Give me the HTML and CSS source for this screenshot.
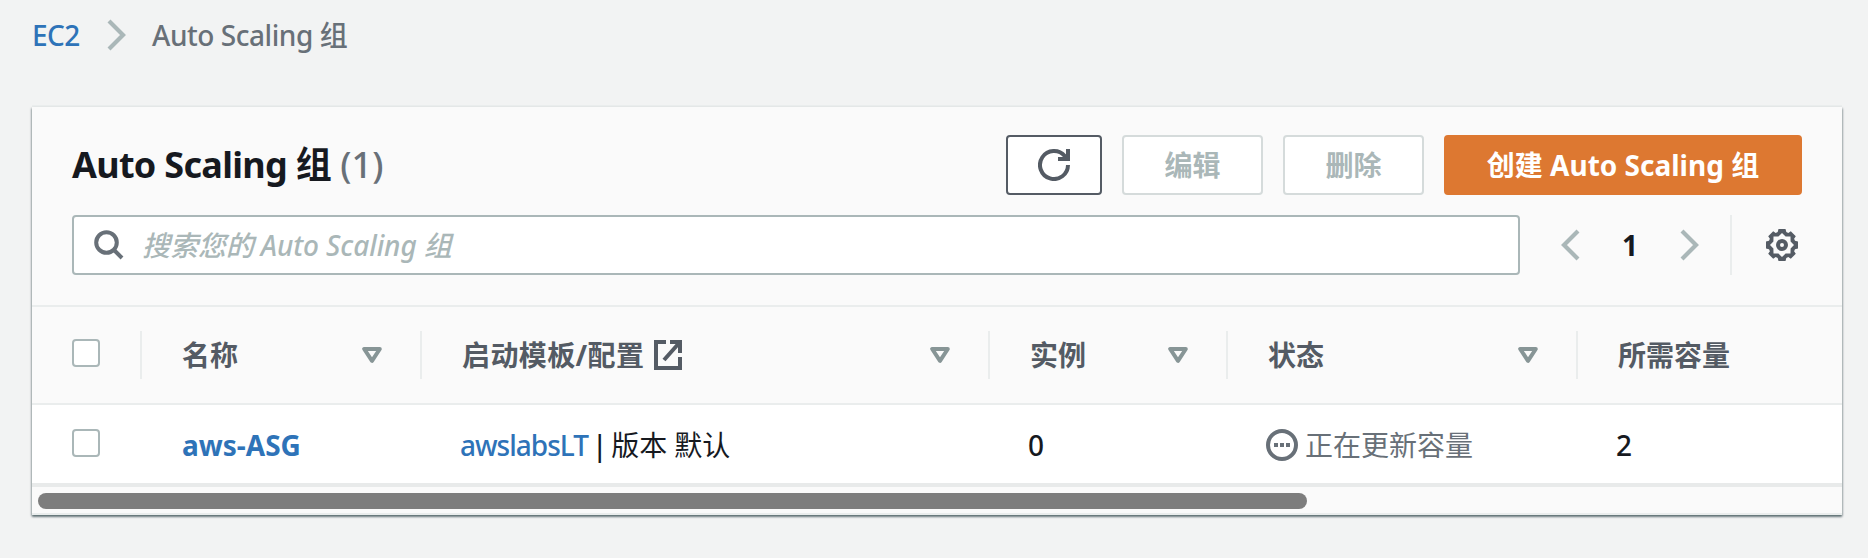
FILE: index.html
```html
<!DOCTYPE html>
<html lang="zh-CN">
<head>
<meta charset="utf-8">
<title>Auto Scaling 组</title>
<link rel="stylesheet" href="styles.css">
</head>
<body>
<nav class="breadcrumb">
  <a class="crumb-link" href="#">EC2</a>
  <svg class="crumb-sep" width="20" height="32" viewBox="0 0 20 32"><path d="M2 2l14 14L2 30" fill="none" stroke="#aab7b8" stroke-width="4.2"/></svg>
  <span class="crumb-current">Auto Scaling 组</span>
</nav>
<main class="card">
  <header class="card-header">
    <div class="title-row">
      <h1 class="title"><span class="title-text">Auto Scaling 组</span> <span class="count">(1)</span></h1>
      <div class="actions">
        <button class="btn btn-icon" aria-label="刷新"><svg width="32" height="32" viewBox="0 0 32 32" fill="none" stroke="#545b64" stroke-width="4"><path d="M30 16A14 14 0 1 1 26.8 7.1L28.2 10"/><path d="M20 10h10V0"/></svg></button>
        <button class="btn btn-disabled" disabled>编辑</button>
        <button class="btn btn-disabled" disabled>删除</button>
        <button class="btn btn-primary">创建 Auto Scaling 组</button>
      </div>
    </div>
    <div class="filter-row">
      <div class="search">
        <svg width="30" height="30" viewBox="0 0 30 30" fill="none" stroke="#687078" stroke-width="4"><circle cx="12.5" cy="12.5" r="10.3"/><path d="M20 20l8 8"/></svg>
        <span class="placeholder">搜索您的 Auto Scaling 组</span>
      </div>
      <div class="pager">
        <svg width="20" height="32" viewBox="0 0 20 32"><path d="M18 2L4 16l14 14" fill="none" stroke="#aab7b8" stroke-width="4.2"/></svg>
        <b class="page">1</b>
        <svg width="20" height="32" viewBox="0 0 20 32"><path d="M2 2l14 14L2 30" fill="none" stroke="#aab7b8" stroke-width="4.2"/></svg>
      </div>
      <div class="settings">
        <svg width="32" height="32" viewBox="0 0 32 32" fill="#545b64"><path fill-rule="evenodd" d="M12.5 0h7l.8 3 2 .9 2.500-1.700 5 5-1.700 2.500.9 2 3 .8v7l-3 .8-.9 2 1.700 2.500-5 5-2.500-1.700-2 .9-.8 3h-7l-.8-3-2-.9-2.500 1.700-5-5 1.700-2.500-.9-2-3-.8v-7l3-.8.9-2-1.700-2.500 5-5 2.500 1.700 2-.9zM16 4l3.600 3.400 4.900.1.100 4.900L28 16l-3.400 3.600-.1 4.900-4.900.1L16 28l-3.600-3.400-4.900-.1-.1-4.900L4 16l3.400-3.600.1-4.900 4.900-.1z"/><circle cx="16" cy="16" r="4" fill="none" stroke="#545b64" stroke-width="4"/></svg>
      </div>
    </div>
  </header>
  <div class="row head">
    <div class="cell check"><span class="box"></span></div>
    <div class="cell"><span>名称</span><svg class="sort" width="20" height="16" viewBox="0 0 20 16"><path d="M2.2 2h15.6L10 13.8z"/></svg></div>
    <div class="cell"><span class="template">启动模板/配置</span><svg class="external" width="28" height="30" viewBox="0 0 28 30" fill="none" stroke="#545b64" stroke-width="4"><path d="M12 2H2v26h24V17M16 2h10v11M26 2L10 20"/></svg><svg class="sort" width="20" height="16" viewBox="0 0 20 16"><path d="M2.2 2h15.6L10 13.8z"/></svg></div>
    <div class="cell"><span>实例</span><svg class="sort" width="20" height="16" viewBox="0 0 20 16"><path d="M2.2 2h15.6L10 13.8z"/></svg></div>
    <div class="cell"><span>状态</span><svg class="sort" width="20" height="16" viewBox="0 0 20 16"><path d="M2.2 2h15.6L10 13.8z"/></svg></div>
    <div class="cell last"><span>所需容量</span></div>
  </div>
  <div class="row body">
    <div class="cell check"><span class="box"></span></div>
    <div class="cell"><a class="name" href="#">aws-ASG</a></div>
    <div class="cell value"><a class="lt" href="#">awslabsLT</a><span class="bar">|</span><span class="version">版本 默认</span></div>
    <div class="cell value">0</div>
    <div class="cell value status"><svg width="32" height="32" viewBox="0 0 32 32"><circle cx="16" cy="16" r="14" fill="none" stroke="#687078" stroke-width="4"/><path d="M8 14h4v4H8zM14 14h4v4h-4zM20 14h4v4h-4z" fill="#687078"/></svg><span>正在更新容量</span></div>
    <div class="cell value">2</div>
  </div>
  <div class="scrollbar"><div class="thumb"></div></div>
</main>
</body>
</html>
```

FILE: styles.css
```css
* { box-sizing: border-box; }

body {
  margin: 0;
  min-height: 558px;
  background: #f2f3f3;
  color: #16191f;
  font: 500 28px/40px "Noto Sans", "Noto Sans CJK SC", sans-serif;
}

a { color: #2e73b8; text-decoration: none; }
svg { display: block; flex: none; }

.breadcrumb {
  display: flex;
  align-items: center;
  height: 107px;
  padding: 0 0 37px 32px;
}
.crumb-link { width: 75px; letter-spacing: -0.6px; }
.crumb-sep { margin-right: 25px; }
.crumb-current { color: #687078; letter-spacing: -0.45px; }

.card {
  width: 1810px;
  height: 408px;
  margin-left: 32px;
  background: #fafafa;
  box-shadow: 0 2px 2px 0 rgba(0, 28, 36, .45), 1px 1px 2px 0 rgba(0, 28, 36, .2), -1px 1px 2px 0 rgba(0, 28, 36, .2), 0 -2px 0 0 #eaeded;
}

.card-header {
  height: 200px;
  padding: 28px 40px 0;
  border-bottom: 2px solid #eaeded;
}
.title-row { display: flex; justify-content: space-between; align-items: center; height: 60px; }
.title { margin: 0; font-size: 36px; font-weight: 700; white-space: nowrap; }
.title-text { letter-spacing: -0.7px; }
.count { color: #687078; font-weight: 500; }
.actions { display: flex; gap: 20px; }

.btn {
  height: 60px;
  width: 141px;
  padding: 0;
  border: 2px solid #d5dbdb;
  border-radius: 4px;
  background: #fff;
  color: #aab7b8;
  font: 700 28px/40px "Noto Sans", "Noto Sans CJK SC", sans-serif;
  white-space: nowrap;
}
.btn-icon { display: flex; align-items: center; justify-content: center; width: 96px; border-color: #545b64; }
.btn-primary { width: 358px; border-color: #dd7831; background: #dd7831; color: #fff; }

.filter-row { display: flex; height: 60px; margin-top: 20px; }
.search {
  display: flex;
  align-items: center;
  gap: 18px;
  width: 1448px;
  padding-left: 20px;
  border: 2px solid #aab7b8;
  border-radius: 4px;
  background: #fff;
}
.placeholder { color: #aab7b8; font-style: italic; letter-spacing: -0.1px; }
.pager {
  display: flex;
  align-items: center;
  justify-content: space-between;
  width: 181px;
  margin-left: 40px;
  padding-right: 41px;
}
.page { font-weight: 700; }
.settings {
  display: flex;
  align-items: center;
  margin-left: -11px;
  padding-left: 34px;
  border-left: 2px solid #eaeded;
}

.row { display: grid; grid-template-columns: 110px 280px 568px 238px 350px 264px; }
.cell { display: flex; align-items: center; padding: 0 38px 0 40px; white-space: nowrap; }
.head {
  height: 98px;
  padding: 24px 0;
  border-bottom: 2px solid #eaeded;
  color: #545b64;
  font-weight: 700;
}
.head .cell { border-right: 2px solid #eaeded; }
.head .last { border-right: 0; }
.head .check { padding-bottom: 4px; }
.box { width: 28px; height: 28px; border: 2px solid #aab7b8; border-radius: 4px; background: #fff; }
.sort { margin-left: auto; fill: none; stroke: #879596; stroke-width: 4; stroke-linejoin: round; }
.template { letter-spacing: 0.4px; }
.external { margin-left: 10px; }

.body { height: 82px; background: #fff; border-bottom: 4px solid #e8eaea; }
.body .check { padding-bottom: 2px; }
.body .cell:not(.check) { padding-top: 1px; }
.name { font-weight: 700; }
.value { padding-left: 38px; }
.lt { letter-spacing: -1px; }
.status { color: #687078; gap: 7px; font-weight: 400; }
.bar { margin: 0 4px 0 4px; }
.version { font-weight: 400; letter-spacing: -0.1px; }

.scrollbar { height: 28px; padding: 6px; border-bottom: 2px solid #eaeded; }
.thumb { width: 1269px; height: 16px; border-radius: 8px; background: #7d7d7d; }
```
